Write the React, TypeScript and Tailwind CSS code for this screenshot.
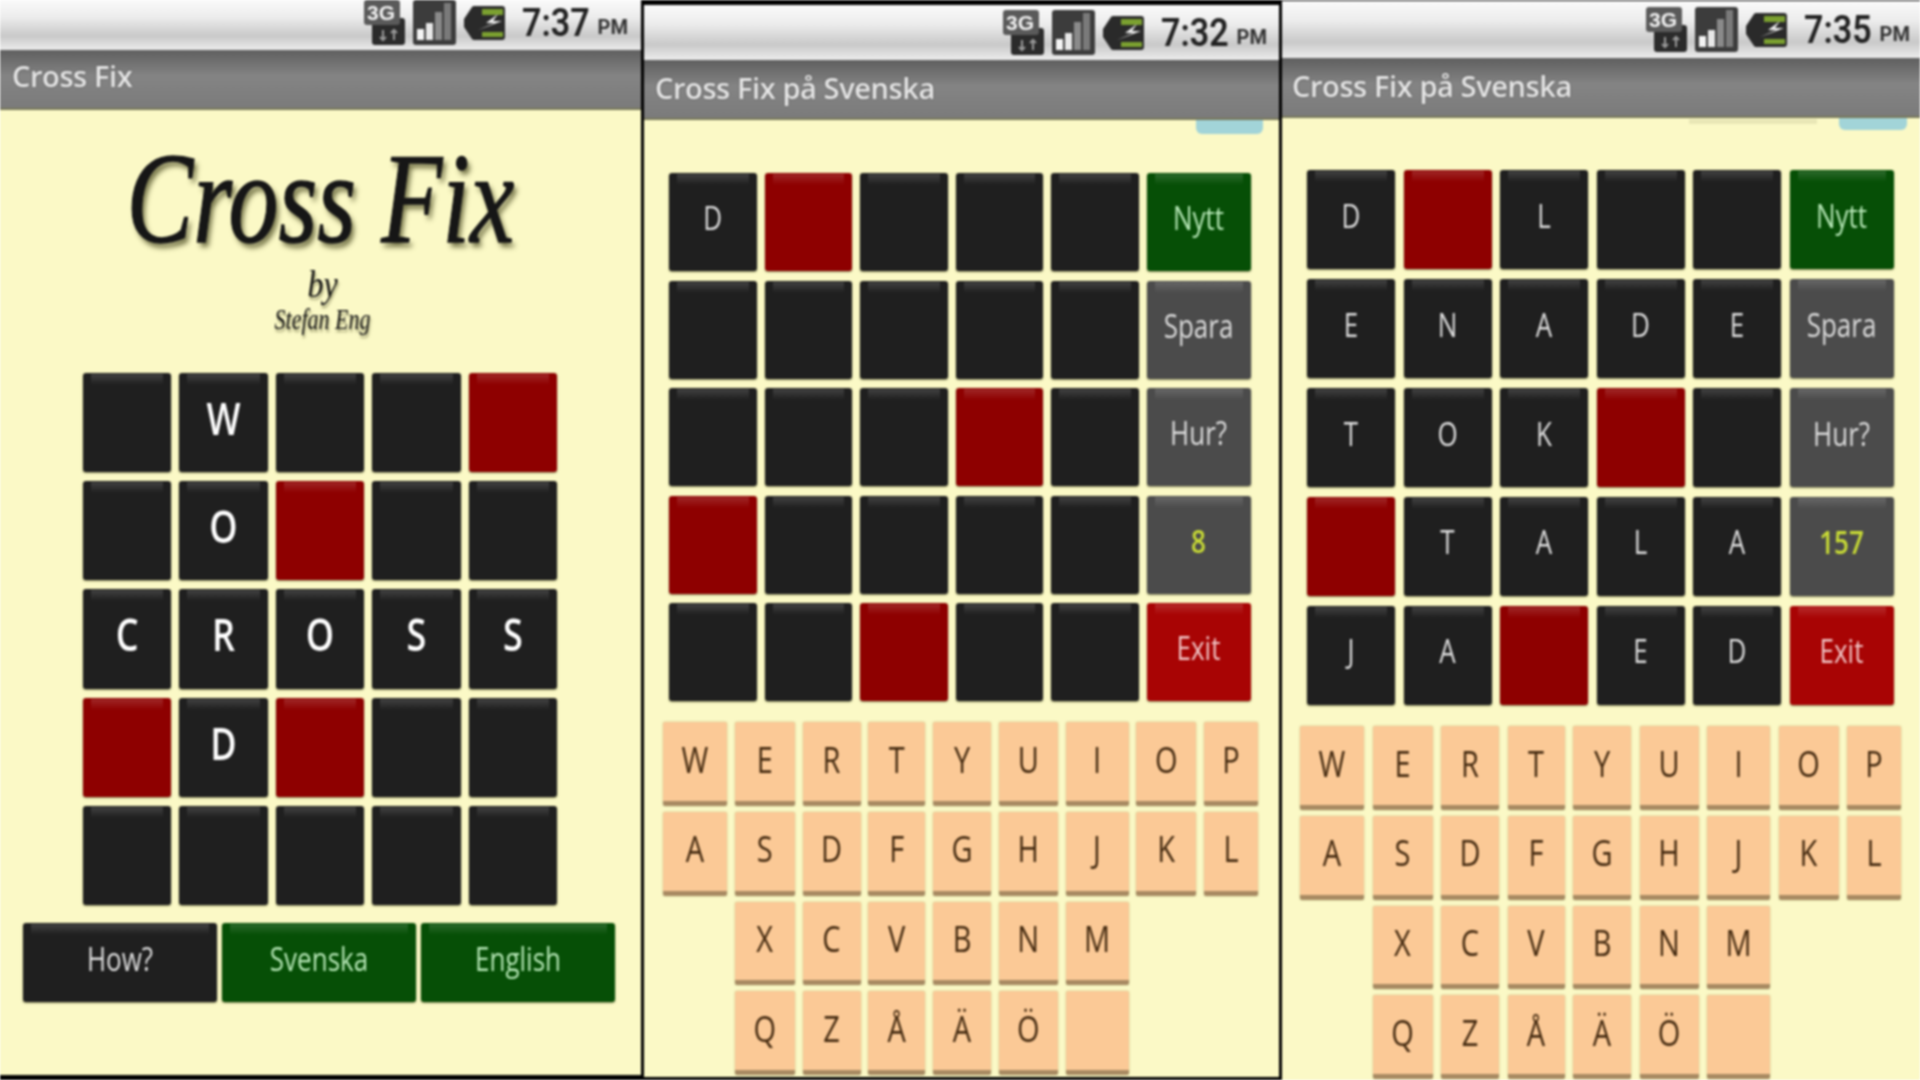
const SANS = "font-['Open_Sans','Noto_Sans',sans-serif]";

type Tone = "dark" | "red" | "green" | "gray" | "exit";

const TONES: Record<Tone, string> = {
  dark: "bg-[#1f1f1f] text-[#dedede]",
  red: "bg-[#8e0000] text-[#f3d0d0]",
  green: "bg-[#064f06] text-[#b5e6b5]",
  gray: "bg-[#4b4b4b] text-[#dcdcdc]",
  exit: "bg-[#a80404] text-[#f0c4c4]",
};

// "#" marks a red square, "" an empty black one
const HOME_ROWS = ["", "W", "", "", "#", "", "O", "#", "", "", "C", "R", "O", "S", "S", "#", "D", "#", "", "", "", "", "", "", ""];
const GAME_ONE = [
  ["D", "#", "", "", ""],
  ["", "", "", "", ""],
  ["", "", "", "#", ""],
  ["#", "", "", "", ""],
  ["", "", "#", "", ""],
];
const GAME_TWO = [
  ["D", "#", "L", "", ""],
  ["E", "N", "A", "D", "E"],
  ["T", "O", "K", "#", ""],
  ["#", "T", "A", "L", "A"],
  ["J", "A", "#", "E", "D"],
];
const KEYS = ["W", "E", "R", "T", "Y", "U", "I", "O", "P", "A", "S", "D", "F", "G", "H", "J", "K", "L"];
const KEYS_LOWER = ["X", "C", "V", "B", "N", "M", "Q", "Z", "Å", "Ä", "Ö", ""];

function Cell({ label, tone, bold, yellow }: { label: string; tone: Tone; bold?: boolean; yellow?: boolean }) {
  return (
    <div className={`relative flex items-center justify-center rounded-[3px] pb-[7px] shadow-[0_1px_2px_rgba(60,60,20,0.6)] ${TONES[tone]}`}>
      <span className="absolute left-[8px] right-[8px] top-[1px] h-[11px] bg-gradient-to-b from-white/15 to-transparent" />
      <span
        className={`inline-block ${SANS} scale-y-[1.25] ${bold ? "text-[36px] font-semibold text-white" : "text-[26px] font-medium"} ${yellow ? "font-semibold text-[#c9dc35]" : ""}`}
      >
        {label}
      </span>
    </div>
  );
}

function GameGrid({ rows, score }: { rows: string[][]; score: string }) {
  const side: { label: string; tone: Tone; yellow?: boolean }[] = [
    { label: "Nytt", tone: "green" },
    { label: "Spara", tone: "gray" },
    { label: "Hur?", tone: "gray" },
    { label: score, tone: "gray", yellow: true },
    { label: "Exit", tone: "exit" },
  ];
  return (
    <>
      {rows.map((row, r) => (
        <div key={r} className="contents">
          {row.map((c, i) => (
            <Cell key={i} label={c === "#" ? "" : c} tone={c === "#" ? "red" : "dark"} />
          ))}
          <Cell label={side[r].label} tone={side[r].tone} yellow={side[r].yellow} />
        </div>
      ))}
    </>
  );
}

function Key({ label }: { label: string }) {
  return (
    <div className="flex items-center justify-center rounded-[2px] border-b-[5px] border-[#a88a62] bg-[#fbc996] pb-[6px] shadow-[0_0_2px_rgba(120,120,60,0.5)]">
      <span className={`inline-block ${SANS} scale-y-[1.25] text-[29px] font-medium text-[#442a10]`}>{label}</span>
    </div>
  );
}

function Keyboard({ className }: { className: string }) {
  return (
    <div className={`grid h-[353px] grid-cols-[64px_60px_58px_57px_58px_59px_63px_60px_54px] grid-rows-4 gap-y-[6px] ${className}`}>
      {KEYS.map((k) => (
        <Key key={k} label={k} />
      ))}
      {KEYS_LOWER.map((k, i) => (
        <div key={k + i} className="contents">
          {i % 6 === 0 && <div />}
          <Key label={k} />
          {i % 6 === 5 && (
            <>
              <div />
              <div />
            </>
          )}
        </div>
      ))}
    </div>
  );
}

function StatusIcons() {
  return (
    <div className="flex items-center gap-[8px]">
      <svg width="41" height="46" viewBox="0 0 41 46">
        <rect x="8" y="18" width="33" height="27" rx="3" fill="#2b2b2b" />
        <rect x="0" y="0" width="36" height="25" rx="3" fill="#5a5a5a" />
        <text x="17" y="20" textAnchor="middle" fontSize="21" fontWeight="700" fill="#f2f2f2" fontFamily="Liberation Sans, sans-serif">
          3G
        </text>
        <path d="M19 30v10M16 37l3 3 3-3M30 40V30M27 33l3-3 3 3" stroke="#9a9a9a" strokeWidth="2" fill="none" />
      </svg>
      <svg width="43" height="46" viewBox="0 0 43 46">
        <rect x="0" y="0" width="43" height="45" rx="3" fill="#3c3c3c" />
        <rect x="4" y="29" width="7" height="11" fill="#f4f4f4" />
        <rect x="13" y="23" width="7" height="17" fill="#e8e8e8" />
        <rect x="22" y="12" width="7" height="28" fill="#8a8a8a" />
        <rect x="31" y="3" width="7" height="37" fill="#7a7a7a" />
      </svg>
      <svg width="41" height="36" viewBox="0 0 41 36">
        <path d="M10 1h28a3 3 0 0 1 3 3v28a3 3 0 0 1-3 3H10a3 3 0 0 1-2-1L0 22v-8L8 2a3 3 0 0 1 2-1z" fill="#2a2a2a" />
        <rect x="18" y="4" width="21" height="6" fill="#7ba030" />
        <rect x="18" y="27" width="21" height="5" fill="#7ba030" />
        <path d="M34 9L22 18h8L14 25l24-9h-9l5-7z" fill="#f2f2f2" />
      </svg>
    </div>
  );
}

function StatusBar({ time, className }: { time: string; className: string }) {
  return (
    <div className={`flex items-center justify-end bg-[linear-gradient(to_bottom,#fafafa_0%,#ececec_35%,#c9c9c9_72%,#ececec_100%)] ${className}`}>
      <StatusIcons />
      <span className="ml-[17px] inline-block scale-y-[1.12] whitespace-nowrap font-['Roboto',sans-serif] text-[34px] font-semibold leading-none text-[#222]">
        {time}
      </span>
      <span className="ml-[8px] mt-[8px] font-['Roboto',sans-serif] text-[20px] font-bold leading-none text-[#333]">PM</span>
    </div>
  );
}

function TitleBar({ title, className }: { title: string; className: string }) {
  return (
    <div className={`flex h-[60px] items-center border-b-2 border-[#77775a] bg-[linear-gradient(to_bottom,#5f5f5f_0%,#848484_45%,#7b7b7b_100%)] ${className}`}>
      <span className={`whitespace-nowrap ${SANS} text-[29px] font-semibold tracking-[-0.4px] text-[#e6e6e6] [text-shadow:0_0_2px_rgba(40,40,40,0.6)]`}>{title}</span>
    </div>
  );
}

function HomePanel() {
  return (
    <div className="flex h-[1075px] w-[641px] shrink-0 flex-col bg-[#fbf9c6]">
      <StatusBar time="7:37" className="h-[50px] pb-[4px] pr-[13px]" />
      <TitleBar title="Cross Fix" className="pb-[6px] pl-[12px]" />
      <div className="flex flex-col items-center font-['Liberation_Serif',serif] italic text-[#161616]">
        <div className="mt-[39px] h-[100px] scale-y-[1.3] text-[100px] leading-[100px] [-webkit-text-stroke:1px_#161616] [text-shadow:3px_4px_5px_rgba(70,70,30,0.75)]">
          Cross Fix
        </div>
        <div className="ml-[4px] mt-[20px] h-[30px] scale-y-[1.2] text-[32px] leading-[30px] [text-shadow:1px_2px_2px_rgba(70,70,30,0.5)]">by</div>
        <div className="ml-[4px] mt-[10px] h-[22px] scale-y-[1.3] text-[22px] leading-[22px] [text-shadow:1px_2px_2px_rgba(70,70,30,0.5)]">Stefan Eng</div>
      </div>
      <div className="ml-[83px] mt-[42px] grid h-[532px] w-[474px] grid-cols-5 grid-rows-5 gap-x-[8.4px] gap-y-[9px]">
        {HOME_ROWS.map((c, i) => (
          <Cell key={i} label={c === "#" ? "" : c} tone={c === "#" ? "red" : "dark"} bold />
        ))}
      </div>
      <div className="ml-[23px] mt-[18px] grid h-[79px] w-[592px] grid-cols-3 gap-x-[5px]">
        <Cell label="How?" tone="dark" />
        <Cell label="Svenska" tone="green" />
        <Cell label="English" tone="green" />
      </div>
    </div>
  );
}

export default function App() {
  return (
    <div className="flex h-[1080px] w-[1920px] gap-[3px] overflow-hidden bg-black blur-[0.8px]">
      <HomePanel />

      <div className="relative mt-[5px] flex h-[1072px] w-[635px] shrink-0 flex-col bg-[#fbf9c6]">
        <StatusBar time="7:32" className="h-[55px] pr-[12px]" />
        <TitleBar title="Cross Fix på Svenska" className="pb-[2px] pl-[11px]" />
        <span className="absolute left-[552px] top-[115px] h-[14px] w-[67px] rounded-b-[6px] bg-[#a2d4d8]" />
        <div className="ml-[25px] mt-[53px] grid h-[528px] grid-cols-[repeat(5,87.5px)_104px] grid-rows-5 gap-x-[8px] gap-y-[9.5px]">
          <GameGrid rows={GAME_ONE} score="8" />
        </div>
        <div className="ml-[19px] mt-[21px]">
          <Keyboard className="gap-x-[7.75px]" />
        </div>
      </div>

      <div className="relative mt-[1px] flex h-[1079px] w-[638px] shrink-0 flex-col bg-[#fbf9c6]">
        <StatusBar time="7:35" className="h-[57px] pr-[10px]" />
        <TitleBar title="Cross Fix på Svenska" className="pb-[3px] pl-[10px]" />
        <span className="absolute left-[407px] top-[118px] h-[5px] w-[128px] bg-[#e9e7b6]" />
        <span className="absolute left-[557px] top-[117px] h-[12px] w-[68px] rounded-b-[6px] bg-[#a2d4d8]" />
        <div className="ml-[25px] mt-[52px] grid h-[535px] grid-cols-[repeat(5,88px)_104px] grid-rows-5 gap-x-[8.5px] gap-y-[9.7px]">
          <GameGrid rows={GAME_TWO} score="157" />
        </div>
        <div className="ml-[18px] mt-[21px]">
          <Keyboard className="gap-x-[8.5px]" />
        </div>
      </div>
    </div>
  );
}
